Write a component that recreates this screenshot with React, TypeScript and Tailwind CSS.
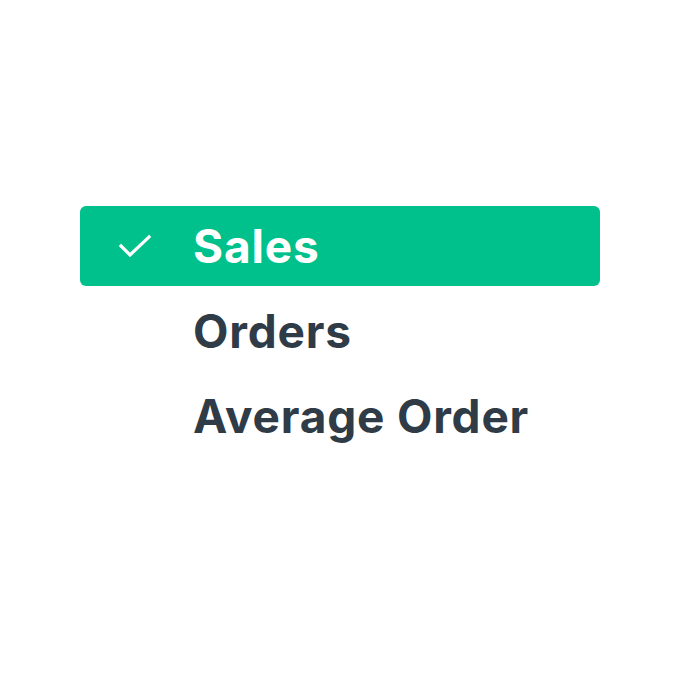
export default function App() {
  const items = [
    { label: "Sales", active: true },
    { label: "Orders", active: false },
    { label: "Average Order", active: false },
  ];

  return (
    <div className="min-h-[700px] w-[700px] bg-white pt-[206px] pl-[80px]" style={{ fontFamily: "Inter, 'Liberation Sans', sans-serif" }}>
      <ul className="flex w-[520px] flex-col gap-[5px]">
        {items.map((item) => (
          <li
            key={item.label}
            className={`flex h-20 items-center rounded-md pl-[38px] ${item.active ? "bg-[#00c18b] text-white" : "text-[#2f3b46]"}`}
          >
            <span className="flex w-[34px] shrink-0 justify-center">
              {item.active && (
                <svg width="34" height="24" viewBox="0 0 34 24" fill="none" stroke="currentColor" strokeWidth="3.2" strokeLinecap="square">
                  <polyline points="3,12 12,21 31,3" />
                </svg>
              )}
            </span>
            <span className="ml-[41px] text-[46px] font-bold leading-none tracking-[0.8px]">{item.label}</span>
          </li>
        ))}
      </ul>
    </div>
  );
}
